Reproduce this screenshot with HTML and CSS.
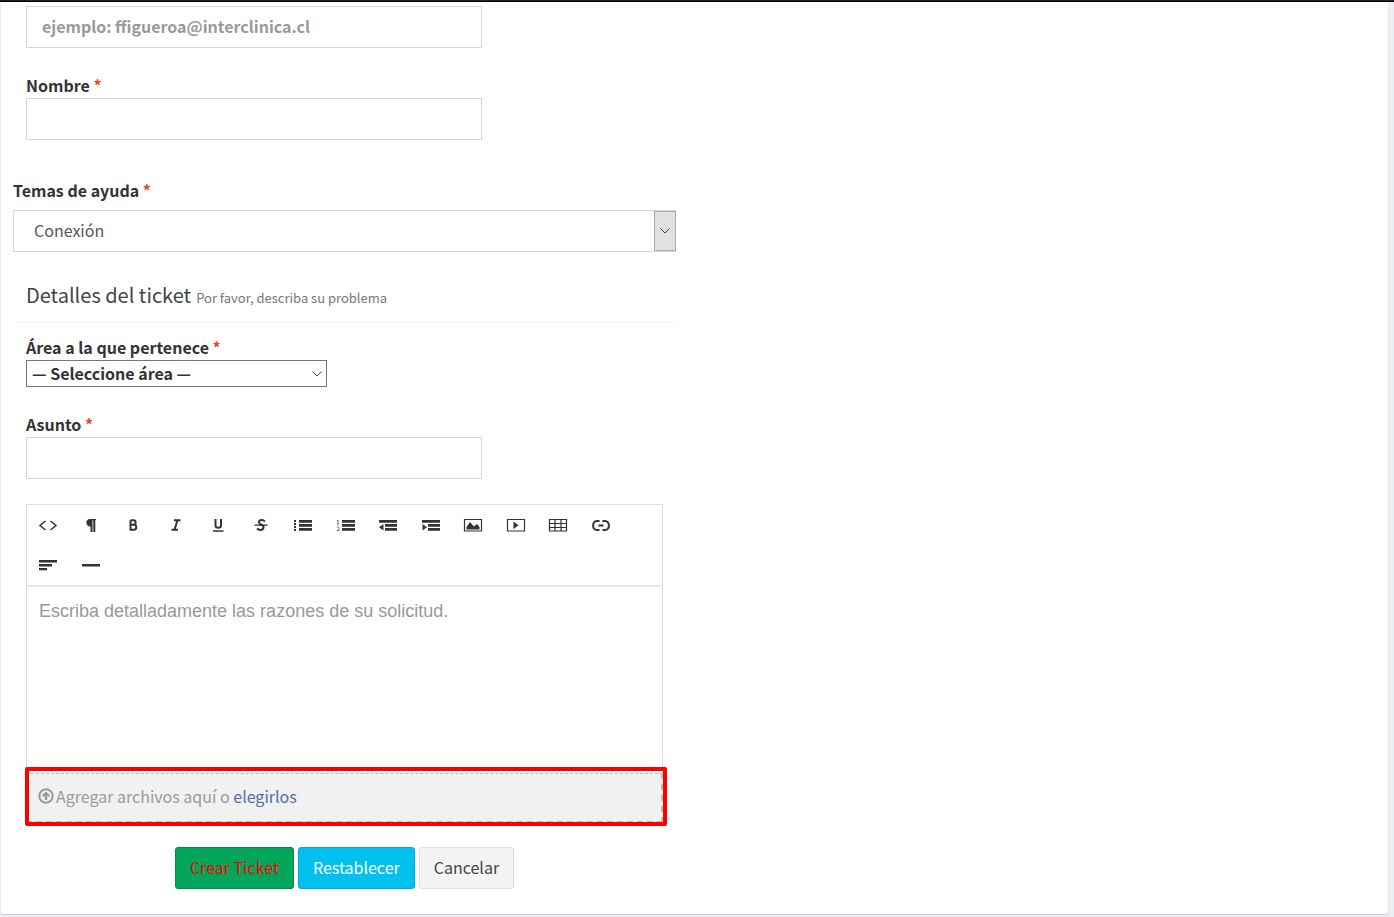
FILE: index.html
```html
<!DOCTYPE html>
<html lang="es">
<head>
    <meta charset="UTF-8">
    <meta name="viewport" content="width=device-width, initial-scale=1.0">
    <title>Nuevo ticket</title>
    <link rel="stylesheet" href="styles.css">
</head>
<body>
    <div class="top-bar"></div>
    <main class="card">
        <form class="ticket-form">
            <div class="field">
                <input class="text-input" type="email" aria-label="Correo" placeholder="ejemplo: ffigueroa@interclinica.cl">
            </div>
            <div class="field">
                <label for="name">Nombre <span class="required">*</span></label>
                <input class="text-input" type="text" id="name">
            </div>

            <div class="topic">
                <label for="topic">Temas de ayuda <span class="required">*</span></label>
                <div class="topic-select">
                    <select id="topic">
                        <option>Conexión</option>
                    </select>
                    <span class="topic-arrow">
                        <svg width="10" height="6" viewBox="0 0 10 6"><path d="M.5 .5L5 5L9.500 .5"/></svg>
                    </span>
                </div>
            </div>

            <div class="form-header">
                <h3>Detalles del ticket</h3>
                <span>Por favor, describa su problema</span>
            </div>

            <div class="field">
                <label for="area">Área a la que pertenece <span class="required">*</span></label>
                <div class="area-select">
                    <select id="area">
                        <option>— Seleccione área —</option>
                    </select>
                    <svg class="area-arrow" width="10" height="6" viewBox="0 0 10 6"><path d="M.5 .5L5 5L9.500 .5"/></svg>
                </div>
            </div>
            <div class="field">
                <label for="subject">Asunto <span class="required">*</span></label>
                <input class="text-input" type="text" id="subject">
            </div>

            <div class="message">
                <div class="editor">
                    <div class="toolbar">
                        <button type="button" aria-label="HTML"><svg viewBox="0 0 20 16"><path class="line" d="M7.500 4L2 8.500L7.500 13M12.500 4L18 8.500L12.500 13"/></svg></button>
                        <button type="button" aria-label="Formato"><svg viewBox="0 0 20 16"><path d="M9 2H15V3H14.300V15H12.300V3.300H11.500V15H9.500V9.500C4 9.500 4 2 9 2Z"/></svg></button>
                        <button type="button" aria-label="Negrita"><svg viewBox="0 0 20 16"><path class="bold" d="M7.500 3.300H10.500C13.300 3.300 13.300 7.800 10.500 7.800H7.500M7.500 7.800H11C14 7.800 14 12.700 11 12.700H7.500V3.300"/></svg></button>
                        <button type="button" aria-label="Cursiva"><svg viewBox="0 0 20 16"><path class="bold" d="M8 3.200H14.500M5.500 12.800H12M11.500 3.200L8.500 12.800"/></svg></button>
                        <button type="button" aria-label="Subrayado"><svg viewBox="0 0 20 16"><path class="bold" d="M7.500 2V8.500C7.500 11.500 13 11.500 13 8.500V2"/><path d="M5 13.300H15.500V14.800H5Z"/></svg></button>
                        <button type="button" aria-label="Tachado"><svg viewBox="0 0 20 16"><path class="bold" d="M14 4.500C12 2 7.500 2.500 8 5.500C8.500 8 13 7.500 12.500 10.500C12 13.500 8 13.500 6 11.500"/><path d="M3.500 7.500H16.500V8.800H3.500Z"/></svg></button>
                        <button type="button" aria-label="Lista"><svg viewBox="0 0 20 16"><path d="M1 3H3V5H1ZM1 6H3V8H1ZM1 9H3V11H1ZM1 12H3V14H1ZM6 3H19V5.700H6ZM6 7H19V9.700H6ZM6 11H19V13.700H6Z"/></svg></button>
                        <button type="button" aria-label="Lista numerada"><svg viewBox="0 0 20 16"><path class="thin" d="M1 4L2 3V7M1 7H3M1 10.500C1.500 9 3.500 10 3 11.500L1 13.500H3.500"/><path d="M6 3H19V5.700H6ZM6 7H19V9.700H6ZM6 11H19V13.700H6Z"/></svg></button>
                        <button type="button" aria-label="Reducir sangría"><svg viewBox="0 0 20 16"><path d="M1 3H19V5.700H1ZM7 7H19V9.700H7ZM7 11H19V13.700H7ZM1 10.300L5.500 7V13.500Z"/></svg></button>
                        <button type="button" aria-label="Aumentar sangría"><svg viewBox="0 0 20 16"><path d="M1 3H19V5.700H1ZM7 7H19V9.700H7ZM7 11H19V13.700H7ZM6 10.300L1.500 7V13.500Z"/></svg></button>
                        <button type="button" aria-label="Imagen"><svg viewBox="0 0 20 16"><path class="frame" d="M1.500 2.500H18.500V14H1.500Z"/><path d="M3.500 12.500V10L7 5L11 9.500L14 7L16.500 10V12.500Z"/></svg></button>
                        <button type="button" aria-label="Video"><svg viewBox="0 0 20 16"><path class="frame" d="M1.500 2.500H18.500V14H1.500Z"/><path d="M7.500 4.500L12.500 8.300L7.500 12Z"/></svg></button>
                        <button type="button" aria-label="Tabla"><svg viewBox="0 0 20 16"><path class="frame" d="M1.500 2.500H18.500V14H1.500ZM1.500 6.500H18.500M1.500 10.500H18.500M7 2.500V14M13 2.500V14"/></svg></button>
                        <button type="button" aria-label="Enlace"><svg viewBox="0 0 20 16"><path class="bold" d="M8.500 4H6C.8 4 .8 13 6 13H8.500M11.500 4H14C19.200 4 19.200 13 14 13H11.500M7.500 8.500H12.500"/></svg></button>
                        <button type="button" aria-label="Alinear"><svg viewBox="0 0 20 16"><path d="M1 3H19V5.500H1ZM1 7H14V9.500H1ZM1 11H9V13.300H1Z"/></svg></button>
                        <button type="button" aria-label="Línea"><svg viewBox="0 0 20 16"><path d="M1 7H19V9.500H1Z"/></svg></button>
                    </div>
                    <textarea aria-label="Mensaje" placeholder="Escriba detalladamente las razones de su solicitud."></textarea>
                </div>
                <div class="dropzone">
                    <svg width="16" height="16" viewBox="0 0 16 16"><circle cx="8" cy="8" r="6.700"/><path d="M8 3.500L12.200 7.700L11 9L9.200 7.400V12H6.800V7.400L5 9L3.800 7.700Z"/></svg>
                    <span>Agregar archivos aquí o <a href="#">elegirlos</a></span>
                </div>
            </div>

            <div class="actions">
                <button class="btn btn-success" type="submit">Crear Ticket</button>
                <button class="btn btn-info" type="reset">Restablecer</button>
                <button class="btn btn-default" type="button">Cancelar</button>
            </div>
        </form>
    </main>
</body>
</html>
```
FILE: styles.css
```css
* {
    box-sizing: border-box;
}

body {
    margin: 0;
    background: #ecf0f5;
    color: #333;
    font-family: "Noto Sans CJK SC", "Open Sans", sans-serif;
    font-size: 16px;
    line-height: 24px;
}

.top-bar {
    height: 2px;
    background: #222;
    border-bottom: 1px solid #000;
}

.card {
    margin: 0 6px 3px 1px;
    padding: 4px 12px 25px;
    background: #fff;
    border-radius: 0 0 3px 3px;
    box-shadow: 0 1px 1px rgba(0, 0, 0, 0.15);
}

.ticket-form {
    max-width: 663px;
}

.field {
    margin: 0 13px 25px;
}

label {
    display: block;
    margin-bottom: 1px;
    font-weight: 700;
}

.required {
    color: #dd4b39;
}

input,
select,
textarea,
button {
    font: inherit;
    color: inherit;
}

.text-input {
    display: block;
    width: 100%;
    max-width: 456px;
    height: 42px;
    padding: 0 15px 2px;
    border: 1px solid #d2d6de;
    border-radius: 0;
    background: #fff;
    font-weight: 700;
}

.text-input::placeholder,
textarea::placeholder {
    color: #999;
    opacity: 1;
}

.topic {
    margin-top: 38px;
}

.topic-select,
.area-select {
    position: relative;
}

.topic-select {
    margin-top: 8px;
}

select {
    display: block;
    width: 100%;
    appearance: none;
    border-radius: 0;
    background: #fff;
}

.topic-select select {
    height: 42px;
    padding: 0 30px 2px 20px;
    border: 1px solid #d2d6de;
    color: #555;
}

.topic-arrow {
    position: absolute;
    top: 1px;
    right: 0;
    bottom: 1px;
    width: 22px;
    display: flex;
    align-items: center;
    justify-content: center;
    background: #e1e1e1;
    border: 1px solid #adadad;
    pointer-events: none;
}

.topic-arrow path,
.area-arrow path {
    fill: none;
    stroke: #444;
}

.form-header {
    display: flex;
    align-items: baseline;
    gap: 5px;
    margin-bottom: 12px;
    padding: 31px 13px 12px;
    border-bottom: 1px solid #f4f4f4;
}

.form-header h3 {
    margin: 0;
    color: #444;
    font-size: 20px;
    font-weight: 400;
}

.form-header span {
    color: #777;
    font-size: 13px;
}

.area-select {
    max-width: 301px;
}

.area-select select {
    height: 27px;
    padding: 0 24px 3px 5px;
    border: 1px solid #767676;
    font-weight: 700;
}

.area-arrow {
    position: absolute;
    top: 11px;
    right: 5px;
    pointer-events: none;
}

.message {
    margin: 0 13px;
}

.editor {
    border: 1px solid #ddd;
    border-bottom: none;
}

.toolbar {
    display: grid;
    grid-template-columns: repeat(14, 1fr);
    padding-right: 40px;
    box-shadow: 0 1px 3px rgba(0, 0, 0, 0.2);
    clip-path: inset(0 0 -4px);
}

.toolbar button {
    display: flex;
    align-items: center;
    justify-content: center;
    height: 40px;
    padding: 0;
    border: none;
    background: none;
}

.toolbar svg {
    width: 20px;
    height: 16px;
    fill: #333;
}

.toolbar .line,
.toolbar .bold,
.toolbar .thin,
.toolbar .frame {
    fill: none;
    stroke: #333;
    stroke-width: 1.5;
}

.toolbar .bold {
    stroke-width: 2;
}

.toolbar .thin {
    stroke-width: 0.7;
}

.toolbar .frame {
    stroke-width: 1.2;
}

textarea {
    display: block;
    width: 100%;
    height: 188px;
    padding: 14px 12px;
    border: none;
    background: transparent;
    font-family: "Liberation Sans", Arial, sans-serif;
    font-size: 18px;
    resize: none;
}

.dropzone {
    position: relative;
    display: flex;
    align-items: center;
    gap: 2px;
    height: 50px;
    padding: 0 10px 3px;
    background: #f1f1f1;
    border: 2px dashed #bbb;
    border-top-width: 1px;
    color: #999;
}

/* red frame around the attachments area */
.dropzone::after {
    content: "";
    position: absolute;
    inset: -7px -6px -5px -3px;
    border: 4px solid #f00;
    border-radius: 2px;
    pointer-events: none;
}

.dropzone svg {
    fill: #999;
}

.dropzone circle {
    fill: none;
    stroke: #999;
    stroke-width: 2;
}

.dropzone a {
    color: #4f6fa5;
    text-decoration: none;
}

.actions {
    display: flex;
    justify-content: center;
    gap: 4px;
    margin-top: 24px;
}

.btn {
    height: 42px;
    padding: 0 14px 2px;
    border: 1px solid;
    border-radius: 3px;
    cursor: pointer;
}

.btn-success {
    background: #00a65a;
    border-color: #008d4c;
    color: #f00;
}

.btn-info {
    background: #00c0ef;
    border-color: #00acd6;
    color: #fff;
}

.btn-default {
    background: #f4f4f4;
    border-color: #ddd;
    color: #444;
}
```
